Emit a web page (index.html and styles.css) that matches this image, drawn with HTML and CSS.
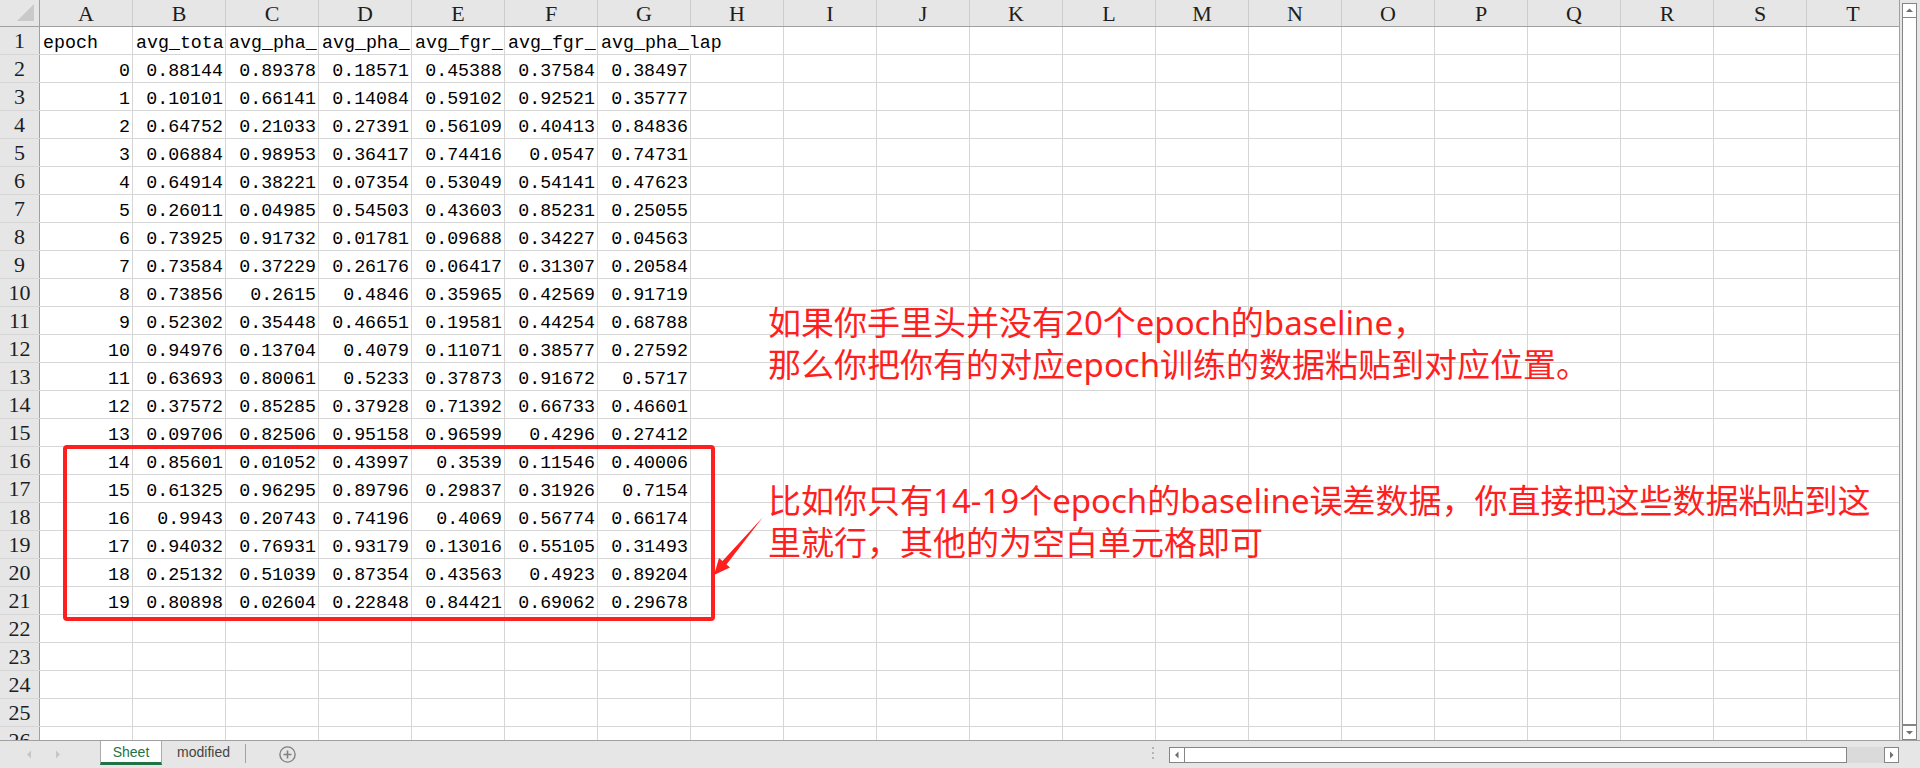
FILE: index.html
```html
<!DOCTYPE html>
<html lang="zh-CN">
<head>
<meta charset="utf-8">
<title>Sheet</title>
<link rel="stylesheet" href="styles.css">
</head>
<body>
<div class="app">
  <div class="main">
    <div class="sheet">
      <div class="hdr">
        <div class="corner"><svg class="tri" width="20" height="20" viewBox="0 0 20 20"><polygon points="1,18 18,18 18,1" fill="#c9c9c9"/></svg></div>
        <div>A</div><div>B</div><div>C</div><div>D</div><div>E</div><div>F</div><div>G</div><div>H</div><div>I</div><div>J</div>
        <div>K</div><div>L</div><div>M</div><div>N</div><div>O</div><div>P</div><div>Q</div><div>R</div><div>S</div><div>T</div>
      </div>
      <div class="row"><div class="rh">1</div><div class="c">epoch</div><div class="c">avg_tota</div><div class="c">avg_pha_</div><div class="c">avg_pha_</div><div class="c">avg_fgr_</div><div class="c">avg_fgr_</div><div class="c ov">avg_pha_lap</div></div>
      <div class="row"><div class="rh">2</div><div class="c n">0</div><div class="c n">0.88144</div><div class="c n">0.89378</div><div class="c n">0.18571</div><div class="c n">0.45388</div><div class="c n">0.37584</div><div class="c n">0.38497</div></div>
      <div class="row"><div class="rh">3</div><div class="c n">1</div><div class="c n">0.10101</div><div class="c n">0.66141</div><div class="c n">0.14084</div><div class="c n">0.59102</div><div class="c n">0.92521</div><div class="c n">0.35777</div></div>
      <div class="row"><div class="rh">4</div><div class="c n">2</div><div class="c n">0.64752</div><div class="c n">0.21033</div><div class="c n">0.27391</div><div class="c n">0.56109</div><div class="c n">0.40413</div><div class="c n">0.84836</div></div>
      <div class="row"><div class="rh">5</div><div class="c n">3</div><div class="c n">0.06884</div><div class="c n">0.98953</div><div class="c n">0.36417</div><div class="c n">0.74416</div><div class="c n">0.0547</div><div class="c n">0.74731</div></div>
      <div class="row"><div class="rh">6</div><div class="c n">4</div><div class="c n">0.64914</div><div class="c n">0.38221</div><div class="c n">0.07354</div><div class="c n">0.53049</div><div class="c n">0.54141</div><div class="c n">0.47623</div></div>
      <div class="row"><div class="rh">7</div><div class="c n">5</div><div class="c n">0.26011</div><div class="c n">0.04985</div><div class="c n">0.54503</div><div class="c n">0.43603</div><div class="c n">0.85231</div><div class="c n">0.25055</div></div>
      <div class="row"><div class="rh">8</div><div class="c n">6</div><div class="c n">0.73925</div><div class="c n">0.91732</div><div class="c n">0.01781</div><div class="c n">0.09688</div><div class="c n">0.34227</div><div class="c n">0.04563</div></div>
      <div class="row"><div class="rh">9</div><div class="c n">7</div><div class="c n">0.73584</div><div class="c n">0.37229</div><div class="c n">0.26176</div><div class="c n">0.06417</div><div class="c n">0.31307</div><div class="c n">0.20584</div></div>
      <div class="row"><div class="rh">10</div><div class="c n">8</div><div class="c n">0.73856</div><div class="c n">0.2615</div><div class="c n">0.4846</div><div class="c n">0.35965</div><div class="c n">0.42569</div><div class="c n">0.91719</div></div>
      <div class="row"><div class="rh">11</div><div class="c n">9</div><div class="c n">0.52302</div><div class="c n">0.35448</div><div class="c n">0.46651</div><div class="c n">0.19581</div><div class="c n">0.44254</div><div class="c n">0.68788</div></div>
      <div class="row"><div class="rh">12</div><div class="c n">10</div><div class="c n">0.94976</div><div class="c n">0.13704</div><div class="c n">0.4079</div><div class="c n">0.11071</div><div class="c n">0.38577</div><div class="c n">0.27592</div></div>
      <div class="row"><div class="rh">13</div><div class="c n">11</div><div class="c n">0.63693</div><div class="c n">0.80061</div><div class="c n">0.5233</div><div class="c n">0.37873</div><div class="c n">0.91672</div><div class="c n">0.5717</div></div>
      <div class="row"><div class="rh">14</div><div class="c n">12</div><div class="c n">0.37572</div><div class="c n">0.85285</div><div class="c n">0.37928</div><div class="c n">0.71392</div><div class="c n">0.66733</div><div class="c n">0.46601</div></div>
      <div class="row"><div class="rh">15</div><div class="c n">13</div><div class="c n">0.09706</div><div class="c n">0.82506</div><div class="c n">0.95158</div><div class="c n">0.96599</div><div class="c n">0.4296</div><div class="c n">0.27412</div></div>
      <div class="row"><div class="rh">16</div><div class="c n">14</div><div class="c n">0.85601</div><div class="c n">0.01052</div><div class="c n">0.43997</div><div class="c n">0.3539</div><div class="c n">0.11546</div><div class="c n">0.40006</div></div>
      <div class="row"><div class="rh">17</div><div class="c n">15</div><div class="c n">0.61325</div><div class="c n">0.96295</div><div class="c n">0.89796</div><div class="c n">0.29837</div><div class="c n">0.31926</div><div class="c n">0.7154</div></div>
      <div class="row"><div class="rh">18</div><div class="c n">16</div><div class="c n">0.9943</div><div class="c n">0.20743</div><div class="c n">0.74196</div><div class="c n">0.4069</div><div class="c n">0.56774</div><div class="c n">0.66174</div></div>
      <div class="row"><div class="rh">19</div><div class="c n">17</div><div class="c n">0.94032</div><div class="c n">0.76931</div><div class="c n">0.93179</div><div class="c n">0.13016</div><div class="c n">0.55105</div><div class="c n">0.31493</div></div>
      <div class="row"><div class="rh">20</div><div class="c n">18</div><div class="c n">0.25132</div><div class="c n">0.51039</div><div class="c n">0.87354</div><div class="c n">0.43563</div><div class="c n">0.4923</div><div class="c n">0.89204</div></div>
      <div class="row"><div class="rh">21</div><div class="c n">19</div><div class="c n">0.80898</div><div class="c n">0.02604</div><div class="c n">0.22848</div><div class="c n">0.84421</div><div class="c n">0.69062</div><div class="c n">0.29678</div></div>
      <div class="row"><div class="rh">22</div></div>
      <div class="row"><div class="rh">23</div></div>
      <div class="row"><div class="rh">24</div></div>
      <div class="row"><div class="rh">25</div></div>
      <div class="row"><div class="rh">26</div></div>

      <div class="redbox"></div>
      <svg class="arrow" width="70" height="80" viewBox="700 505 70 80"><polygon points="763,517 726.5,564.5 730,567.5 714,575 719,558 722.5,561" fill="#ff1f1f"/></svg>
      <div class="note n1">
        <div>如果你手里头并没有20个epoch的baseline，</div>
        <div>那么你把你有的对应epoch训练的数据粘贴到对应位置。</div>
      </div>
      <div class="note n2">
        <div>比如你只有14-19个epoch的baseline误差数据，你直接把这些数据粘贴到这</div>
        <div>里就行，其他的为空白单元格即可</div>
      </div>
    </div>
    <div class="vs">
      <div class="vs-main">
        <div class="vs-up"><svg width="13" height="13" viewBox="0 0 13 13"><polygon points="3,8 10,8 6.5,4.5" fill="#6f6f6f"/></svg></div>
        <div class="vs-thumb"></div>
      </div>
      <div class="vs-dn"><svg width="13" height="13" viewBox="0 0 13 13"><polygon points="3,5 10,5 6.5,8.5" fill="#6f6f6f"/></svg></div>
    </div>
  </div>
  <div class="tabbar">
    <div class="nav"><svg width="100" height="27" viewBox="0 0 100 27"><polygon points="31,9.5 31,17.5 27,13.5" fill="#c6c6c6"/><polygon points="56,9.5 56,17.5 60,13.5" fill="#c6c6c6"/></svg></div>
    <div class="tab active">Sheet</div>
    <div class="tab">modified</div>
    <div class="sep"></div>
    <div class="add"><svg width="17" height="17" viewBox="0 0 17 17"><circle cx="8.5" cy="8.5" r="7.6" fill="none" stroke="#808080" stroke-width="1.4"/><path d="M8.5 4.5v8M4.5 8.5h8" stroke="#808080" stroke-width="1.6"/></svg></div>
    <div class="spacer"></div>
    <div class="split"><i></i><i></i><i></i></div>
    <div class="hs">
      <div class="hs-main">
        <div class="hs-l"><svg width="14" height="14" viewBox="0 0 14 14"><polygon points="8.5,3.5 8.5,10.5 5,7" fill="#6f6f6f"/></svg></div>
        <div class="hs-thumb"></div>
      </div>
      <div class="hs-trough"></div>
      <div class="hs-r"><svg width="13" height="14" viewBox="0 0 13 14"><polygon points="5,3.5 5,10.5 8.5,7" fill="#6f6f6f"/></svg></div>
    </div>
  </div>
</div>
</body>
</html>
```
FILE: styles.css
```css
* { box-sizing: border-box; margin: 0; padding: 0; }
html, body { width: 1920px; height: 768px; overflow: hidden; background: #fff; }
body { font-family: "Liberation Mono", monospace; color: #000; }

.app { width: 1920px; height: 768px; display: flex; flex-direction: column; }
.main { height: 740px; display: flex; }

.sheet { position: relative; width: 1899px; height: 740px; overflow: hidden; flex: none; }

.hdr, .row { display: grid; grid-template-columns: 40px repeat(20, 93px); }

.hdr { height: 27px; background: #e6e6e6; border-bottom: 1px solid #a0a0a0; }
.hdr > div {
  border-right: 1px solid #cdcdcd;
  font: 22px/24px "Liberation Serif", serif;
  text-align: center;
  padding-top: 2px;
  color: #1e1e1e;
}
.hdr .corner { border-right-color: #a0a0a0; position: relative; padding: 0; }
.tri { position: absolute; left: 16px; top: 3px; }

.row {
  height: 28px;
  border-bottom: 1px solid #d6d6d6;
  background-image: linear-gradient(to right, transparent 92px, #d6d6d6 92px);
  background-size: 93px 100%;
  background-position: 40px 0;
  background-repeat: repeat-x;
}
.rh {
  background: #e6e6e6;
  border-right: 1px solid #a0a0a0;
  font: 22px/27px "Liberation Serif", serif;
  text-align: center;
  color: #1e1e1e;
}
.c {
  font-size: 18.3px;
  line-height: 22px;
  padding: 5px 3px 0 3px;
  overflow: hidden;
  white-space: nowrap;
}
.n { text-align: right; }
.ov { grid-column: span 2; background: #fff; border-right: 1px solid #d6d6d6; overflow: visible; }

.redbox {
  position: absolute;
  left: 63px; top: 445px;
  width: 652px; height: 176px;
  border: 4px solid #ff1f1f;
  border-radius: 4px;
}
.arrow { position: absolute; left: 700px; top: 505px; }

.note {
  position: absolute;
  left: 768px;
  font-family: "Noto Sans", "Noto Sans CJK SC", sans-serif;
  font-size: 33px;
  line-height: 42px;
  color: #ff1f1f;
  white-space: nowrap;
}
.n1 { top: 302px; }
.n2 { top: 480px; }

/* vertical scrollbar */
.vs {
  width: 21px;
  flex: none;
  background: #e6e6e6;
  border-left: 1px solid #a0a0a0;
  padding: 3px 3px 0 2px;
  display: flex;
  flex-direction: column;
}
.vs-main { flex: 1; border: 1px solid #858585; background: #fff; display: flex; flex-direction: column; }
.vs-up { height: 14px; border-bottom: 1px solid #858585; display: flex; }
.vs-thumb { flex: 1; }
.vs-dn { height: 15px; border: 1px solid #858585; background: #fff; display: flex; }

/* tab bar */
.tabbar {
  height: 28px;
  background: #e6e6e6;
  border-top: 1px solid #a0a0a0;
  display: flex;
  font-family: "Liberation Sans", Arial, sans-serif;
  font-size: 14px;
}
.nav { width: 100px; flex: none; }
.tab { width: 83px; flex: none; text-align: center; line-height: 22px; color: #444; }
.tab.active {
  width: 62px;
  height: 24px;
  background: #fff;
  color: #217346;
  border-left: 1px solid #ababab;
  border-right: 1px solid #ababab;
  border-bottom: 3px solid #217346;
}
.sep { width: 1px; height: 19px; margin-top: 3px; background: #a3a3a3; flex: none; }
.add { width: 17px; height: 17px; margin: 5px 0 0 33px; flex: none; display: flex; }
.spacer { flex: 1; }
.split { width: 17px; flex: none; display: flex; flex-direction: column; align-items: flex-start; padding: 6px 0 0 0; gap: 3px; }
.split i { display: block; width: 2px; height: 2px; background: #b4b4b4; }
.hs { width: 730px; height: 16px; margin-top: 6px; margin-right: 21px; flex: none; display: flex; }
.hs-main { width: 678px; border: 1px solid #858585; background: #fff; display: flex; }
.hs-l { width: 15px; border-right: 1px solid #858585; display: flex; }
.hs-thumb { flex: 1; }
.hs-trough { flex: 1; background: #dadada; }
.hs-r { width: 15px; border: 1px solid #858585; background: #fff; display: flex; }
```
